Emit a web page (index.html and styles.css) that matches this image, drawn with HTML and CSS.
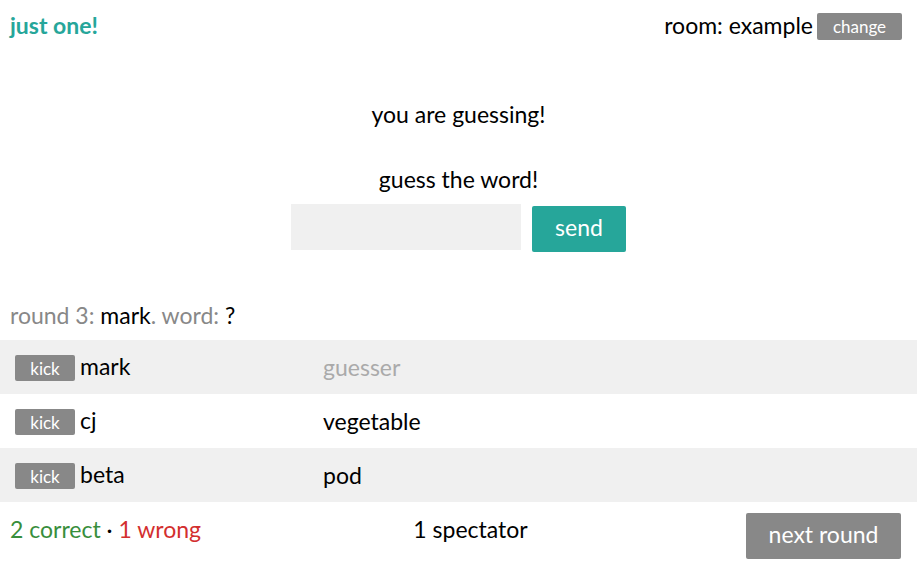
FILE: index.html
```html
<!DOCTYPE html>
<html>
<head>
<meta charset="utf-8">
<link rel="stylesheet" href="styles.css">
</head>
<body>
<header class="top">
  <div class="logo">just one!</div>
  <div class="room">room: example <button class="btn small">change</button></div>
</header>
<main class="center">
  <p class="msg">you are guessing!</p>
  <p class="msg2">guess the word!</p>
  <form class="guess">
    <input class="field" type="text">
    <button class="btn teal" type="button">send</button>
  </form>
</main>
<div class="round"><span class="muted">round 3: </span>mark<span class="muted">. word: </span>?</div>
<div class="players">
  <div class="row shade"><div class="name"><button class="btn kick">kick</button>mark</div><div class="word muted2">guesser</div></div>
  <div class="row"><div class="name"><button class="btn kick">kick</button>cj</div><div class="word">vegetable</div></div>
  <div class="row shade"><div class="name"><button class="btn kick">kick</button>beta</div><div class="word">pod</div></div>
</div>
<footer class="bottom">
  <div class="score"><span class="good">2 correct</span> · <span class="bad">1 wrong</span></div>
  <div class="spect">1 spectator</div>
  <div class="next"><button class="btn big">next round</button></div>
</footer>
</body>
</html>
```
FILE: styles.css
```css
body {
  margin: 0;
  font-family: Lato, "Noto Sans", sans-serif;
  font-size: 23px;
  color: #000;
  background: #fff;
}
.top {
  display: flex;
  justify-content: space-between;
  align-items: center;
  padding: 10px 15px 0 10px;
  height: 30px;
}
.logo {
  color: #26a69a;
  font-weight: bold;
  font-size: 23px;
}
.room {
  display: flex;
  align-items: center;
  gap: 4px;
  font-size: 23px;
}
.btn {
  font-family: inherit;
  border: none;
  border-radius: 2px;
  background: #888;
  color: #fff;
  cursor: pointer;
  padding: 0;
}
.small {
  width: 85px;
  height: 27px;
  font-size: 17px;
  margin-top: 3px;
}
.center {
  text-align: center;
  padding-top: 59px;
}
.msg {
  margin: 0;
  height: 30px;
  line-height: 30px;
}
.msg2 {
  margin: 35px 0 0;
  height: 30px;
  line-height: 30px;
}
.guess {
  display: flex;
  justify-content: center;
  align-items: flex-start;
  gap: 11px;
  margin: 10px 0 0 0;
}
.field {
  width: 230px;
  height: 46px;
  box-sizing: border-box;
  border: none;
  background: #f0f0f0;
  font-family: inherit;
  font-size: 20px;
}
.teal {
  background: #26a69a;
  width: 94px;
  height: 46px;
  margin-top: 2px;
  font-size: 23px;
  padding-bottom: 5px;
}
.round {
  padding: 50px 10px 0;
  height: 38px;
  line-height: 26px;
}
.muted { color: #888; }
.muted2 { color: #aaa; }
.players { display: flex; flex-direction: column; }
.row {
  display: flex;
  height: 54px;
  align-items: center;
}
.shade { background: #f0f0f0; }
.name {
  width: 308px;
  padding-left: 15px;
  display: flex;
  align-items: center;
  gap: 5px;
  margin-top: -2px;
}
.kick {
  width: 60px;
  height: 26px;
  font-size: 17px;
  margin-top: 4px;
}
.bottom {
  display: flex;
  align-items: flex-start;
  padding: 11px 16px 0 10px;
}
.score, .spect, .next { flex: 1; }
.score { padding-top: 2px; }
.spect { text-align: center; padding-top: 2px; padding-left: 30px; }
.next { text-align: right; }
.good { color: #388e3c; }
.bad { color: #d32f2f; }
.big {
  width: 155px;
  height: 46px;
  font-size: 23px;
  padding-bottom: 4px;
}
```
